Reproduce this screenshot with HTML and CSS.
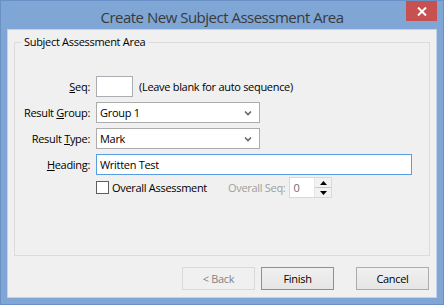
FILE: index.html
```html
<!DOCTYPE html>
<html lang="en">
<head>
    <meta charset="UTF-8">
    <title>Create New Subject Assessment Area</title>
    <link rel="stylesheet" href="styles.css">
</head>
<body>
    <div class="window">
        <div class="titlebar">
            <span class="title">Create New Subject Assessment Area</span>
            <button class="close-btn" aria-label="Close">
                <svg width="10" height="9" viewBox="0 0 10 9"><path d="M1 0.5 L9 8.5 M9 0.5 L1 8.5" stroke="#fff" stroke-width="2"/></svg>
            </button>
        </div>
        <div class="client">
            <fieldset class="group">
                <legend>Subject Assessment Area</legend>
                <div class="form-grid">
                    <label class="field-label" for="seq"><u>S</u>eq:</label>
                    <div class="field">
                        <input type="text" id="seq" class="text-input seq-input">
                        <span class="hint">(Leave blank for auto sequence)</span>
                    </div>

                    <label class="field-label" for="result-group">Result <u>G</u>roup:</label>
                    <div class="field">
                        <div class="select" id="result-group">
                            <span>Group 1</span>
                            <svg width="8" height="6" viewBox="0 0 8 6"><path d="M1 1.5 L4 4.5 L7 1.5" fill="none" stroke="#666" stroke-width="1.6"/></svg>
                        </div>
                    </div>

                    <label class="field-label" for="result-type">Result <u>T</u>ype:</label>
                    <div class="field">
                        <div class="select" id="result-type">
                            <span>Mark</span>
                            <svg width="8" height="6" viewBox="0 0 8 6"><path d="M1 1.5 L4 4.5 L7 1.5" fill="none" stroke="#666" stroke-width="1.6"/></svg>
                        </div>
                    </div>

                    <label class="field-label" for="heading"><u>H</u>eading:</label>
                    <div class="field">
                        <input type="text" id="heading" class="text-input heading-input" value="Written Test">
                    </div>

                    <span></span>
                    <div class="field check-row">
                        <span class="checkbox"></span>
                        <span class="check-label">Overall Assessment</span>
                        <span class="seq-label">Overall Seq:</span>
                        <div class="spinner">
                            <span class="spin-value">0</span>
                            <div class="spin-buttons">
                                <span class="spin-up"><svg width="7" height="4" viewBox="0 0 7 4"><path d="M3.5 0 L7 4 L0 4 Z" fill="#000"/></svg></span>
                                <span class="spin-down"><svg width="7" height="4" viewBox="0 0 7 4"><path d="M0 0 L7 0 L3.5 4 Z" fill="#000"/></svg></span>
                            </div>
                        </div>
                    </div>
                </div>
            </fieldset>
            <div class="buttons">
                <button class="btn" disabled>&lt; Back</button>
                <button class="btn btn-default">Finish</button>
                <button class="btn btn-cancel">Cancel</button>
            </div>
        </div>
    </div>
</body>
</html>
```

FILE: styles.css
```css
body {
    margin: 0;
    font-family: "Segoe UI", "Open Sans", sans-serif;
    font-size: 11px;
    letter-spacing: -0.3px;
    color: #000;
}
.window {
    width: 444px;
    height: 305px;
    box-sizing: border-box;
    background-color: #7fa6d5;
    border: 1px solid #6a91c5;
    padding: 0 6px 6px 6px;
    display: flex;
    flex-direction: column;
    position: relative;
}
.titlebar {
    height: 28px;
    display: flex;
    align-items: center;
    justify-content: center;
}
.title {
    font-size: 15px;
    letter-spacing: -0.5px;
    color: #3a3a3a;
    margin-top: 3px;
}
.close-btn {
    position: absolute;
    top: 0;
    right: 6px;
    width: 31px;
    height: 20px;
    border: none;
    padding: 0;
    background-color: #c75050;
    display: flex;
    align-items: center;
    justify-content: center;
}
.client {
    flex: 1;
    background-color: #f0f0f0;
    border: 1px solid #c2d3e8;
    display: flex;
    flex-direction: column;
    padding: 4px 6px 7px 6px;
}
.group {
    flex: 1;
    margin: 0;
    border: 1px solid #dcdcdc;
    padding: 26px 0 0 0;
    min-width: 0;
}
.group legend {
    padding: 0 3px;
    margin-left: 6px;
    line-height: 16px;
}
.form-grid {
    display: grid;
    grid-template-columns: 75px auto;
    column-gap: 6px;
    row-gap: 5px;
    align-items: center;
}
.field-label {
    text-align: right;
}
.field {
    display: flex;
    align-items: center;
    height: 21px;
}
.text-input {
    height: 21px;
    box-sizing: border-box;
    border: 1px solid #abadb3;
    background: #fff;
    font: inherit;
    letter-spacing: inherit;
    padding: 0 3px;
    margin: 0;
    outline: none;
}
.seq-input {
    width: 37px;
}
.hint {
    margin-left: 6px;
}
.heading-input {
    width: 316px;
    border-color: #569de5;
}
.select {
    width: 164px;
    height: 21px;
    box-sizing: border-box;
    border: 1px solid #acacac;
    background: #fff;
    display: flex;
    align-items: center;
    justify-content: space-between;
    padding: 0 7px 0 3px;
}
.check-row {
    margin-top: -3px;
}
.checkbox {
    width: 13px;
    height: 13px;
    box-sizing: border-box;
    border: 1px solid #5e5e5e;
    background: #fff;
}
.check-label {
    margin-left: 3px;
}
.seq-label {
    margin-left: 21px;
    color: #a0a0a0;
}
.spinner {
    margin-left: 4px;
    width: 43px;
    height: 21px;
    box-sizing: border-box;
    border: 1px solid #d9d9d9;
    background: #fff;
    display: flex;
}
.spin-value {
    flex: 1;
    color: #6d6d6d;
    padding-left: 3px;
    line-height: 19px;
}
.spin-buttons {
    width: 16px;
    display: flex;
    flex-direction: column;
    border-left: 1px solid #e6e6e6;
    background: #f2f2f2;
}
.spin-buttons span {
    flex: 1;
    display: flex;
    align-items: center;
    justify-content: center;
}
.spin-up {
    border-bottom: 1px solid #c8c8c8;
}
.buttons {
    display: flex;
    justify-content: flex-end;
    margin-top: 11px;
}
.btn {
    width: 73px;
    height: 23px;
    box-sizing: border-box;
    border: 1px solid #acacac;
    background: linear-gradient(#f0f0f0, #e5e5e5);
    font: inherit;
    letter-spacing: inherit;
    color: #000;
    margin-left: 6px;
    padding: 0;
}
.btn:disabled {
    background: #f0f0f0;
    border-color: #d9d9d9;
    color: #838383;
}
.btn-default {
    border-color: #569de5;
}
.btn-cancel {
    margin-left: 22px;
    margin-right: 1px;
}
```
